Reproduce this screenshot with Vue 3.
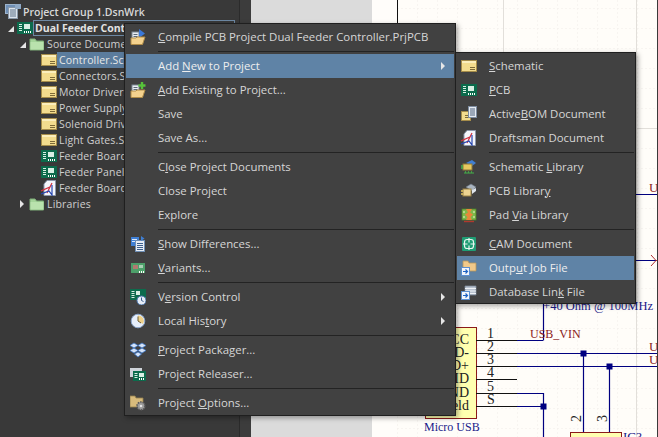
<script setup>
const treeRows = [
  { id: 'group', label: 'Project Group 1.DsnWrk', icon: 'i-group', level: 0 },
  { id: 'project', label: 'Dual Feeder Controller.PrjPCB', icon: 'i-pcb', level: 1, arrow: 'open', focused: true },
  { id: 'source', label: 'Source Documents', icon: 'i-folder', level: 2, arrow: 'open' },
  { id: 'c1', label: 'Controller.SchDoc', icon: 'i-sch', level: 3, selected: true },
  { id: 'c2', label: 'Connectors.SchDoc', icon: 'i-sch', level: 3 },
  { id: 'c3', label: 'Motor Drivers.SchDoc', icon: 'i-sch', level: 3 },
  { id: 'c4', label: 'Power Supply.SchDoc', icon: 'i-sch', level: 3 },
  { id: 'c5', label: 'Solenoid Drivers.SchDoc', icon: 'i-sch', level: 3 },
  { id: 'c6', label: 'Light Gates.SchDoc', icon: 'i-sch', level: 3 },
  { id: 'b1', label: 'Feeder Board.PcbDoc', icon: 'i-pcb', level: 3 },
  { id: 'b2', label: 'Feeder Panel.PcbDoc', icon: 'i-pcb', level: 3 },
  { id: 'b3', label: 'Feeder Board.PCBDwf', icon: 'i-draft', level: 3 },
  { id: 'libs', label: 'Libraries', icon: 'i-folder', level: 2, arrow: 'closed' },
];

// before / underlined key / after
const mainMenu = [
  { t: ['', 'C', 'ompile PCB Project Dual Feeder Controller.PrjPCB'], icon: 'i-compile' },
  { sep: true },
  { t: ['Add ', 'N', 'ew to Project'], active: true, sub: true },
  { t: ['', 'A', 'dd Existing to Project...'], icon: 'i-add' },
  { t: ['Save', '', ''] },
  { t: ['Save As...', '', ''] },
  { sep: true },
  { t: ['C', 'l', 'ose Project Documents'] },
  { t: ['Close Project', '', ''] },
  { t: ['Explore', '', ''] },
  { sep: true },
  { t: ['', 'S', 'how Differences...'], icon: 'i-diff' },
  { t: ['', 'V', 'ariants...'], icon: 'i-variants' },
  { sep: true },
  { t: ['V', 'e', 'rsion Control'], icon: 'i-version', sub: true },
  { t: ['Local His', 't', 'ory'], icon: 'i-clock', sub: true },
  { sep: true },
  { t: ['', 'P', 'roject Packager...'], icon: 'i-box' },
  { t: ['Project Releaser...', '', ''], icon: 'i-release' },
  { sep: true },
  { t: ['Project ', 'O', 'ptions...'], icon: 'i-options' },
];

const subMenu = [
  { t: ['', 'S', 'chematic'], icon: 'i-sch' },
  { t: ['', 'P', 'CB'], icon: 'i-pcb' },
  { t: ['Active', 'B', 'OM Document'], icon: 'i-bom' },
  { t: ['Draftsman Document', '', ''], icon: 'i-draft' },
  { sep: true },
  { t: ['Schematic ', 'L', 'ibrary'], icon: 'i-schlib' },
  { t: ['PCB Librar', 'y', ''], icon: 'i-pcblib' },
  { t: ['Pad ', 'V', 'ia Library'], icon: 'i-pad' },
  { sep: true },
  { t: ['', 'C', 'AM Document'], icon: 'i-cam' },
  { t: ['Outp', 'u', 't Job File'], icon: 'i-output', active: true },
  { t: ['Database Lin', 'k', ' File'], icon: 'i-db' },
];

const pins = [
  { y: 340, n: '1', name: 'CC' },
  { y: 353, n: '2', name: 'D-' },
  { y: 366, n: '3', name: 'D+' },
  { y: 379, n: '4', name: 'ID' },
  { y: 393, n: '5', name: 'ND' },
  { y: 406, n: 'S', name: 'eld' },
];
</script>

<template>
  <div class="screen">
    <svg class="defs" width="0" height="0" aria-hidden="true">
      <defs>
        <symbol id="i-sch" viewBox="0 0 16 16">
          <rect x="0.5" y="2.5" width="15" height="11" fill="#f3dc8e" stroke="#a58c4a" />
          <rect x="1" y="3" width="14" height="2" fill="#fbeebc" />
          <path d="M9 9.5h5M9 11.5h5" stroke="#7d6a38" />
        </symbol>
        <symbol id="i-pcb" viewBox="0 0 16 16">
          <rect x="0" y="2" width="16" height="12" fill="#0c6b4c" />
          <path d="M2 4.5h3M2 6.5h3M2 8.5h3M2 10.5h3" stroke="#d8efe4" />
          <rect x="7" y="4" width="6" height="5" fill="#d8efe4" />
          <path d="M7 12h1M9 12h1M11 12h1M13 12h1" stroke="#ffffff" stroke-width="2" />
        </symbol>
        <symbol id="i-group" viewBox="0 0 16 16">
          <rect x="0.5" y="0.5" width="11" height="9" fill="#6f8fb5" stroke="#9db4cc" />
          <rect x="3.5" y="3.5" width="9" height="11" fill="#dbe3ec" stroke="#8a99aa" />
          <path d="M5 6h6M5 8h6M5 10h6M5 12h6" stroke="#60748a" />
          <rect x="10" y="0" width="6" height="5" fill="#8fa9c6" />
        </symbol>
        <symbol id="i-folder" viewBox="0 0 16 16">
          <path d="M1 3h5l1.500 2H14.500V14H1Z" fill="#a5d59a" stroke="#7fae78" />
          <rect x="1.500" y="6" width="13" height="7.500" fill="#b9e2ad" />
        </symbol>
        <symbol id="i-draft" viewBox="0 0 16 16">
          <path d="M6 0.500H14.500V15.500H3V4Z" fill="#f4f6fb" stroke="#8d96aa" />
          <path d="M0 11L9 7L6 13L11 3" fill="none" stroke="#d03040" stroke-width="1.200" />
          <path d="M0 14L8 11L11 15V5" fill="none" stroke="#2546b0" stroke-width="1.200" />
        </symbol>
        <symbol id="i-compile" viewBox="0 0 16 16">
          <rect x="2" y="3" width="7" height="9" fill="#e9edf2" stroke="#7c8794" />
          <path d="M3.500 5.500h4M3.500 7.500h4" stroke="#5e6a78" />
          <path d="M9 0l6 4.500-6 4.500Z" fill="#3a78d8" />
          <path d="M1 9h5l1-1h8l-2.500 7.500H1Z" fill="#f4d28e" stroke="#b08c48" />
        </symbol>
        <symbol id="i-add" viewBox="0 0 16 16">
          <rect x="2" y="3" width="7" height="9" fill="#e9edf2" stroke="#7c8794" />
          <path d="M3.500 5.500h4M3.500 7.500h4" stroke="#5e6a78" />
          <path d="M1 9h5l1-1h8l-2.500 7.500H1Z" fill="#f4d28e" stroke="#b08c48" />
          <path d="M12 0v7M8.500 3.500h7" stroke="#57c23a" stroke-width="2.400" />
        </symbol>
        <symbol id="i-diff" viewBox="0 0 16 16">
          <rect x="1" y="1" width="8" height="9" fill="#3f7fd4" />
          <rect x="5.500" y="4.500" width="9" height="11" fill="#e8eef6" stroke="#6f8fb5" />
          <path d="M7 7.500h6M7 9.500h6M7 11.500h6M7 13.500h6" stroke="#3c5f8c" />
          <path d="M2 3.500h5M2 5.500h3" stroke="#dbe8fa" />
          <path d="M11 0l3.500 2.500L11 5Z" fill="#3f7fd4" />
        </symbol>
        <symbol id="i-variants" viewBox="0 0 16 16">
          <rect x="1" y="3" width="14" height="10" fill="#4da06a" />
          <rect x="3" y="5" width="5" height="4" fill="#b07a70" />
          <path d="M9 5h4v3H9Z" fill="#a8cfb4" />
          <path d="M9 12h1M11 12h1M13 12h1" stroke="#ffffff" stroke-width="2" />
        </symbol>
        <symbol id="i-version" viewBox="0 0 16 16">
          <rect x="0" y="0" width="16" height="11" fill="#0c6b4c" />
          <path d="M1.500 2.500h3M1.500 4.500h3M1.500 6.500h3M1.500 8.500h3" stroke="#d8efe4" />
          <rect x="6" y="2" width="4" height="4" fill="#d8efe4" />
          <circle cx="11.500" cy="11.500" r="4.500" fill="#e6edf6" stroke="#4b75ad" />
          <path d="M11.500 8.500v3l2 1" fill="none" stroke="#3a5f90" />
        </symbol>
        <symbol id="i-clock" viewBox="0 0 16 16">
          <circle cx="8" cy="8" r="6.800" fill="#e6eefa" stroke="#8ba6cc" />
          <path d="M8 2.500A5.500 5.500 0 0 1 13 11L8 8Z" fill="#edd08a" />
          <path d="M8 3.500V8l3 2" fill="none" stroke="#6b5a30" />
        </symbol>
        <symbol id="i-box" viewBox="0 0 16 16">
          <path d="M4 1L8 3.500 4 6 0 3.500ZM12 1L16 3.500 12 6 8 3.500ZM4 6L8 8.500 4 11 0 8.500ZM12 6L16 8.500 12 11 8 8.500ZM4.500 12L8 10l3.500 2L8 15Z" fill="#d5e3f7" stroke="#3f78c9" stroke-width="0.800" />
        </symbol>
        <symbol id="i-release" viewBox="0 0 16 16">
          <path d="M0 2h12v3H0Z" fill="#cfd4da" />
          <rect x="0" y="2" width="3" height="9" fill="#cfd4da" />
          <rect x="3" y="5" width="13" height="10" fill="#0c6b4c" />
          <path d="M4.500 7.500h3M4.500 9.500h3M4.500 11.500h3" stroke="#d8efe4" />
          <rect x="9" y="7" width="5" height="4" fill="#d8efe4" />
          <path d="M9 13h1M11 13h1M13 13h1" stroke="#ffffff" stroke-width="2" />
        </symbol>
        <symbol id="i-options" viewBox="0 0 16 16">
          <path d="M0 1h5l1 2h7v9H0Z" fill="#d8bb7c" stroke="#96804e" stroke-width="0.800" />
          <circle cx="11" cy="11" r="4" fill="#9a9a9a" stroke="#555555" stroke-width="1.600" stroke-dasharray="1.500 1" />
          <circle cx="11" cy="11" r="1.300" fill="#e4e4e4" />
        </symbol>
        <symbol id="i-bom" viewBox="0 0 16 16">
          <rect x="0.500" y="5.500" width="9" height="9" fill="#f3dc8e" stroke="#a58c4a" />
          <path d="M4 9.500h4M4 11.500h4" stroke="#7d6a38" />
          <rect x="7.500" y="0.500" width="8" height="11" fill="#e6ecf4" stroke="#7d8ca0" />
          <path d="M9 3h5M9 5h5M9 7h5M9 9h5" stroke="#4f637c" />
        </symbol>
        <symbol id="i-schlib" viewBox="0 0 16 16">
          <path d="M5 4L11 1l4 3-4 3Z" fill="#3f7fd4" />
          <rect x="2" y="5" width="9" height="6" fill="#e6c860" stroke="#8f7a36" />
          <path d="M0 7h2M0 9h2M4 13h1M7 13h1M10 13h1" stroke="#45b34a" stroke-width="1.400" />
          <path d="M3 14h10" stroke="#45b34a" />
        </symbol>
        <symbol id="i-pcblib" viewBox="0 0 16 16">
          <path d="M5 4L10 1l5 3-4 4Z" fill="#aab4c0" stroke="#6b7785" stroke-width="0.600" />
          <rect x="2" y="6" width="8" height="7" fill="#ecd391" stroke="#9a8246" />
          <path d="M0 8h2M0 11h2" stroke="#e6c860" stroke-width="1.400" />
          <path d="M11 7l4-2v3l-4 3Z" fill="#dfe5ec" />
        </symbol>
        <symbol id="i-pad" viewBox="0 0 16 16">
          <rect x="1" y="2" width="14" height="11" fill="#7db84a" stroke="#4e7f2a" stroke-width="0.800" />
          <path d="M5 2h6L9 5.500 12 7.500 9.500 10l1.500 3H5l1.500-3L4 7.500 7 5.500Z" fill="#e8873a" />
          <path d="M3 14.500h10" stroke="#b0382e" stroke-width="1.400" />
          <path d="M2 5h2M12 5h2M2 10h2M12 10h2" stroke="#eef4c8" />
        </symbol>
        <symbol id="i-cam" viewBox="0 0 16 16">
          <rect x="1" y="1" width="14" height="14" rx="1" fill="#1f9d74" />
          <rect x="3.500" y="3.500" width="9" height="9" rx="2.500" fill="none" stroke="#e6f6ef" stroke-width="1.200" />
          <path d="M8 2v4.500M8 9.500V14M2 8h4.500M9.500 8H14" stroke="#e6f6ef" stroke-width="1.200" />
        </symbol>
        <symbol id="i-output" viewBox="0 0 16 16">
          <path d="M2 1h5l1 2h7v8H2Z" fill="#f0c98a" stroke="#b8975a" stroke-width="0.800" />
          <rect x="0.500" y="7.500" width="8" height="8" fill="#f2f6fc" stroke="#5c8fd0" />
          <path d="M2 11.500h4M4.500 9.500l2 2-2 2" fill="none" stroke="#1f63c4" stroke-width="1.200" />
        </symbol>
        <symbol id="i-db" viewBox="0 0 16 16">
          <path d="M4 2h11v9H4Z" fill="#b8c2cf" stroke="#7a8694" stroke-width="0.800" />
          <path d="M4 4.500h11M4 7h11M4 9.500h11" stroke="#eef2f6" />
          <rect x="0.500" y="7.500" width="8" height="8" fill="#f2f6fc" stroke="#5c8fd0" />
          <path d="M2 11.500h4M4.500 9.500l2 2-2 2" fill="none" stroke="#1f63c4" stroke-width="1.200" />
        </symbol>
      </defs>
    </svg>

    <aside class="panel">
      <div class="tree">
        <div
          v-for="row in treeRows"
          :key="row.id"
          class="tree-row"
          :class="['level-' + row.level, { focused: row.focused }]"
        >
          <span v-if="row.arrow" class="twisty" :class="row.arrow"></span>
          <svg class="tree-icon" width="16" height="16"><use :href="'#' + row.icon" /></svg>
          <span class="tree-label" :class="{ selected: row.selected }">{{ row.label }}</span>
        </div>
      </div>
    </aside>
    <div class="gutter"></div>
    <div class="grey-area"></div>

    <svg class="sheet" width="285" height="437" viewBox="373 0 285 437">
      <defs>
        <pattern id="grid" x="398" y="8" width="20" height="20" patternUnits="userSpaceOnUse">
          <path d="M0 0H20M0 0V20" stroke="#f1eeea" stroke-dasharray="2 2" fill="none" />
        </pattern>
      </defs>
      <rect x="373" y="0" width="25" height="437" fill="#fffdfa" />
      <rect x="398" y="0" width="260" height="437" fill="#fffdf9" />
      <rect x="398" y="0" width="260" height="437" fill="url(#grid)" />
      <path d="M372.500 0V437M398.500 0V52" stroke="#111111" />
      <path d="M504.500 0V52M637.500 0V437M398 128.500H658" stroke="#e2dfda" />

      <path d="M636 194.500H658M636 260.500H658" stroke="#000080" stroke-width="1.200" />
      <path d="M652 255L657 260.500 652 266M657 260.500H658" fill="none" stroke="#b03030" />
      <text x="650" y="192" class="net">U</text>
      <text x="654" y="310" text-anchor="end" class="part small">+40 Ohm @ 100MHz</text>

      <path d="M544.500 304V340.500M518 353.500H658M518 366.500H658M544.500 393V437M584.500 353V432M610.500 366V432" fill="none" stroke="#000080" stroke-width="1.200" />
      <path d="M518 340.500H544M477 393.500H544M518 406.500H544" fill="none" stroke="#000080" stroke-width="1.200" />
      <rect x="581.500" y="350.500" width="6" height="6" fill="#000080" />
      <rect x="607.500" y="363.500" width="6" height="6" fill="#000080" />
      <rect x="541.500" y="403.500" width="6" height="6" fill="#000080" />

      <rect x="426.500" y="327.500" width="51" height="91" fill="#ffffb0" stroke="#8b1a1a" />
      <g v-for="pin in pins" :key="pin.n">
        <path :d="`M477 ${pin.y + 0.5}H518`" stroke="#111111" />
        <text x="488" :y="pin.y - 2" class="pin-no">{{ pin.n }}</text>
        <text x="470" :y="pin.y + 4" text-anchor="end" class="pin-name">{{ pin.name }}</text>
      </g>
      <text x="531" y="338" class="net wide">USB_VIN</text>
      <text x="650" y="351" class="net">U</text>
      <text x="650" y="364" class="net">U</text>
      <text x="425" y="431" class="part label">Micro USB</text>
      <rect x="571.500" y="432.500" width="51" height="10" fill="#ffffb0" stroke="#8b1a1a" />
      <text x="624" y="441" class="part">IC?</text>
      <text transform="translate(582 422) rotate(-90)" class="pin-no">2</text>
      <text transform="translate(608 422) rotate(-90)" class="pin-no">3</text>
    </svg>

    <div class="menu main-menu">
      <template v-for="(item, i) in mainMenu" :key="i">
        <div v-if="item.sep" class="sep"></div>
        <div v-else class="item" :class="{ active: item.active }">
          <span class="item-icon">
            <svg v-if="item.icon" width="16" height="16"><use :href="'#' + item.icon" /></svg>
          </span>
          <span class="item-text">{{ item.t[0] }}<u v-if="item.t[1]">{{ item.t[1] }}</u>{{ item.t[2] }}</span>
          <span v-if="item.sub" class="caret"></span>
        </div>
      </template>
    </div>

    <div class="menu sub-menu">
      <template v-for="(item, i) in subMenu" :key="i">
        <div v-if="item.sep" class="sep"></div>
        <div v-else class="item" :class="{ active: item.active }">
          <span class="item-icon">
            <svg width="16" height="16"><use :href="'#' + item.icon" /></svg>
          </span>
          <span class="item-text">{{ item.t[0] }}<u v-if="item.t[1]">{{ item.t[1] }}</u>{{ item.t[2] }}</span>
        </div>
      </template>
    </div>
  </div>
</template>

<style scoped>
.screen {
  position: relative;
  display: flex;
  width: 658px;
  height: 437px;
  overflow: hidden;
  background: #3a3a3a;
  font-family: "Open Sans", "Noto Sans", sans-serif;
  font-size: 11.4px;
}

.defs {
  position: absolute;
}

.panel {
  box-sizing: border-box;
  width: 240px;
  padding-top: 4px;
  background: #393939;
  border-right: 1px solid #2b2b2b;
}

.tree-row {
  position: relative;
  display: flex;
  align-items: center;
  height: 16px;
  font-size: 10.5px;
  color: #cfcfcf;
  white-space: nowrap;
}

.level-0 { padding-left: 5px; font-weight: 600; color: #d8d8d8; }
.level-1 { padding-left: 17px; font-weight: 700; color: #e2e2e2; }
.level-2 { padding-left: 29px; letter-spacing: 0.15px; }
.level-3 { padding-left: 41px; letter-spacing: 0.15px; }

.tree-row.focused::after {
  content: "";
  position: absolute;
  left: 33px;
  right: 4px;
  top: 0;
  bottom: 0;
  border: 1px solid #6d88a3;
}

.tree-icon {
  flex: none;
}

.tree-label {
  padding: 0 2px;
  line-height: 16px;
}

.tree-label.selected {
  background: #5b7c9d;
  color: #e8e8e8;
}

.twisty {
  position: absolute;
  width: 0;
  height: 0;
  border-style: solid;
}

.twisty.open {
  margin-left: -9px;
  margin-top: 1px;
  border-width: 0 0 6px 6px;
  border-color: transparent transparent #e6e6e6 transparent;
}

.twisty.closed {
  margin-left: -9px;
  border-width: 4px 0 4px 4px;
  border-color: transparent transparent transparent #e6e6e6;
}

.gutter {
  width: 11px;
  background: #3c3c3c;
}

.grey-area {
  width: 121px;
  background: #dbdbdb;
}

.sheet {
  display: block;
  flex: none;
}

.net {
  font: 13px "Liberation Serif", serif;
  fill: #8b1a1a;
}

.net.wide {
  font-size: 12px;
}

.part {
  font: 13px "Liberation Serif", serif;
  fill: #1a1a8a;
}

.part.small {
  font-size: 12.5px;
}

.part.label {
  font-size: 12px;
}

.pin-no {
  font: 14px "Liberation Serif", serif;
  fill: #222222;
}

.pin-name {
  font: 14px "Liberation Serif", serif;
  fill: #222222;
}

.menu {
  position: absolute;
  box-sizing: border-box;
  padding: 1px;
  background: #414141;
  border: 1px solid #1f1f1f;
  box-shadow: 2px 2px 5px rgba(0, 0, 0, 0.35);
  color: #d6d6d6;
}

.main-menu {
  left: 124px;
  top: 23px;
  width: 332px;
  height: 393px;
}

.sub-menu {
  left: 455px;
  top: 52px;
  width: 181px;
  height: 252px;
}

.item {
  position: relative;
  display: flex;
  align-items: center;
  height: 24px;
  white-space: nowrap;
}

.item.active {
  background: #5f83a6;
  color: #eeeeee;
}

.item-icon {
  display: flex;
  flex: none;
  justify-content: center;
  width: 24px;
  margin-right: 8px;
}

.item-text {
  padding-bottom: 2px;
}

.sep {
  height: 1px;
  margin: 2px 0 2px 32px;
  background: #232323;
}

.caret {
  position: absolute;
  right: 9px;
  top: 8px;
  width: 0;
  height: 0;
  border-style: solid;
  border-width: 4px 0 4px 4px;
  border-color: transparent transparent transparent #e6e6e6;
}
</style>

<style>
html, body {
  margin: 0;
  background: #3a3a3a;
}
</style>
